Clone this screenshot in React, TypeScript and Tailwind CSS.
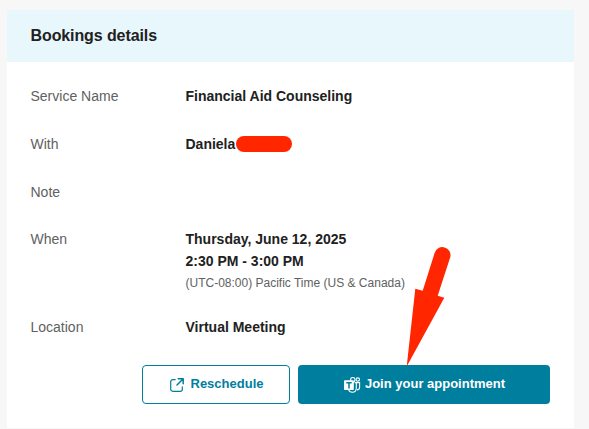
import { ReactNode } from "react";

function Row({
  label,
  className,
  children,
}: {
  label: string;
  className: string;
  children?: ReactNode;
}) {
  return (
    <div className={`flex ${className}`}>
      <div className="w-[155px] shrink-0 text-[#616161]">{label}</div>
      <div className="font-bold text-[#212121]">{children}</div>
    </div>
  );
}

function ExternalIcon() {
  return (
    <svg
      width="14"
      height="14"
      viewBox="0 0 14 14"
      fill="none"
      stroke="currentColor"
      strokeWidth="1.2"
      strokeLinecap="round"
      strokeLinejoin="round"
    >
      <path d="M5.2 1.7H2.8a2.1 2.1 0 0 0-2.1 2.1v7.4a2.1 2.1 0 0 0 2.1 2.1h7.4a2.1 2.1 0 0 0 2.1-2.1V8.8" />
      <path d="M8.2.8h5v5M13 1 7 7" strokeWidth="1.5" />
    </svg>
  );
}

function TeamsIcon() {
  return (
    <svg width="17" height="16" viewBox="0 0 17 16" fill="none" stroke="white">
      <circle cx="8.8" cy="2.7" r="2.2" strokeWidth="1.1" />
      <circle cx="13.8" cy="2.6" r="1.7" strokeWidth="1.1" />
      <path
        d="M10.6 5.6h5v4.7c0 1.6-.9 2.6-2.6 2.6M12.3 5.6v5.2c0 2.8-1.4 4.5-3.9 4.5-2 0-3.4-1-3.8-2.6"
        strokeWidth="1.1"
      />
      <rect x="0" y="3.2" width="9.8" height="9.9" rx="0.8" fill="white" stroke="none" />
      <path d="M2.3 5.8h5.4M5 5.8v5.6" stroke="#007e9e" strokeWidth="1.5" />
    </svg>
  );
}

export default function App() {
  return (
    <div className="relative h-[429px] w-[589px] overflow-hidden bg-[#f7f7f7] pt-[10px] pl-[7px] font-['Liberation_Sans',Arial,sans-serif] text-sm leading-[22px]">
      <div className="h-[418px] w-[567px] bg-white">
        <div className="flex h-[52px] items-center bg-[#e8f7fc] pl-[23.5px]">
          <h1 className="text-base font-bold tracking-[-0.1px] text-[#212121]">
            Bookings details
          </h1>
        </div>
        <div className="pt-[23px] pl-[23.5px]">
          <Row label="Service Name" className="h-12">
            Financial Aid Counseling
          </Row>
          <Row label="With" className="h-12">
            <span className="flex items-center">
              Daniela
              <span className="ml-[0.5px] h-4 w-14 rounded-full bg-[#ff2600]" />
            </span>
          </Row>
          <Row label="Note" className="h-[47px]" />
          <Row label="When" className="h-[88px]">
            <p>Thursday, June 12, 2025</p>
            <p>2:30 PM - 3:00 PM</p>
            <p className="text-xs leading-[22px] font-normal text-[#616161]">
              (UTC-08:00) Pacific Time (US &amp; Canada)
            </p>
          </Row>
          <Row label="Location" className="h-[49px]">
            Virtual Meeting
          </Row>
        </div>
        <div className="flex justify-end gap-2 pr-6 text-[13px] font-bold">
          <button className="flex h-[39px] w-[148px] items-center justify-center gap-[7px] rounded-[4px] border border-[#007e9e] pl-px text-[#007e9e]">
            <ExternalIcon />
            <span className="pb-0.5">Reschedule</span>
          </button>
          <button className="flex h-[39px] w-[252px] items-center justify-center gap-1 rounded-[4px] bg-[#007e9e] pl-px text-white">
            <TeamsIcon />
            <span className="pb-0.5">Join your appointment</span>
          </button>
        </div>
      </div>
      {/* pointer over the join button */}
      <svg
        className="absolute top-[240px] left-[400px]"
        width="56"
        height="130"
        viewBox="400 240 56 130"
        fill="#ff2600"
      >
        <path d="M406.7 366.5 415.3 288.7 422.7 290.7 434.7 252.7A8.1 8.1 0 0 1 450.3 257L437.7 295.7 444.3 297.7Z" />
      </svg>
    </div>
  );
}
